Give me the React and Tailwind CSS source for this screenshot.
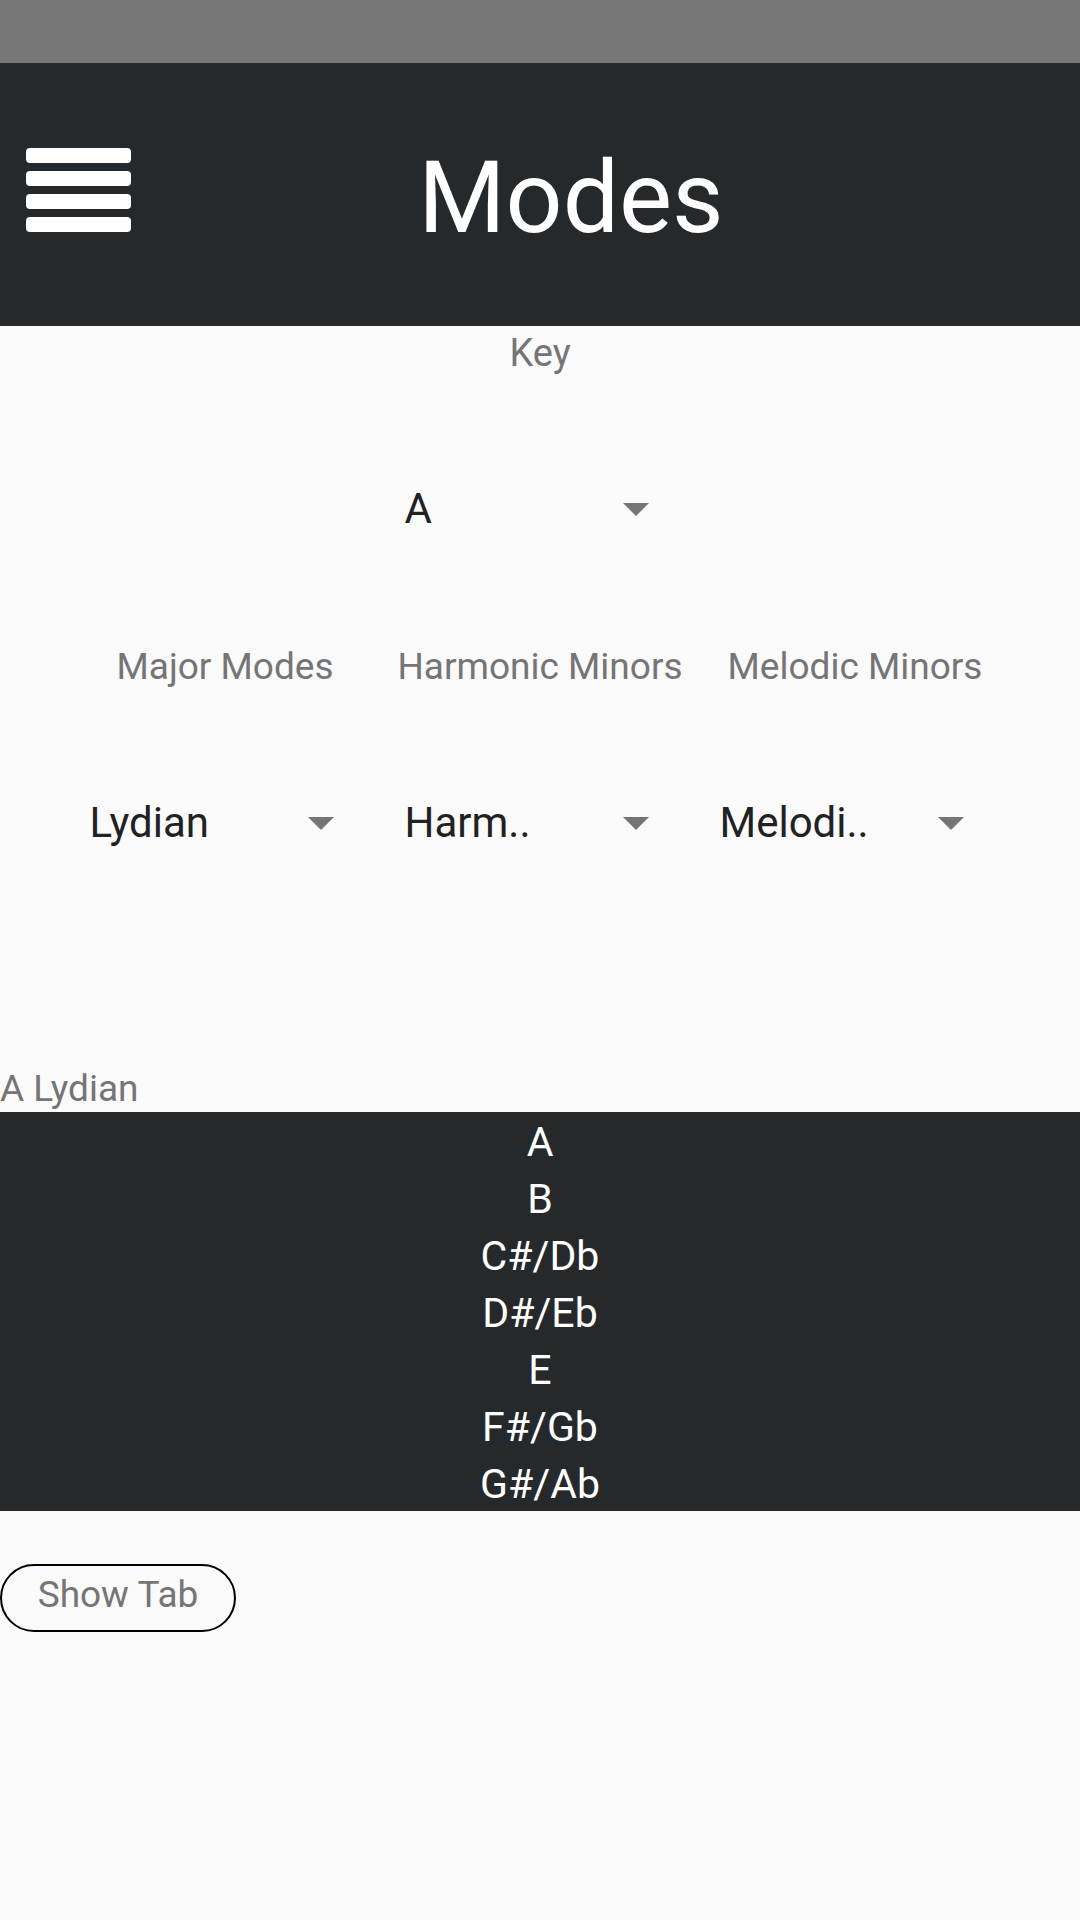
import React, { useState } from "react";

const NOTES = ["A", "B", "C#/Db", "D#/Eb", "E", "F#/Gb", "G#/Ab"];

const COLUMNS = [
  { label: "Major Modes", value: "Lydian" },
  { label: "Harmonic Minors", value: "Harm.." },
  { label: "Melodic Minors", value: "Melodi.." },
];

const Caret = () => (
  <svg width="26" height="13" viewBox="0 0 26 13" className="shrink-0">
    <path d="M0 0 L26 0 L13 13 Z" fill="#757575" />
  </svg>
);

// spinner-style select: value on the left, small triangle on the right
const Dropdown = ({ value }) => (
  <div className="ml-[22px] w-[244px] h-[48px] flex items-center justify-between">
    <span className="text-[42px] leading-[48px] text-[#212121]">{value}</span>
    <Caret />
  </div>
);

const Hamburger = () => (
  <div className="mt-[85px] ml-[26px] w-[105px] flex flex-col gap-[8px]">
    <div className="h-[15px] rounded-[4px] bg-white" />
    <div className="h-[15px] rounded-[4px] bg-white" />
    <div className="h-[15px] rounded-[4px] bg-white" />
    <div className="h-[15px] rounded-[4px] bg-white" />
  </div>
);

export default function App() {
  const [showTab, setShowTab] = useState(false);

  return (
    <div
      className="w-[1080px] min-h-[1920px] bg-[#fafafa]"
      style={{ fontFamily: "Roboto, 'Noto Sans', sans-serif" }}
    >
      <div className="h-[63px] bg-[#777777]" />

      <header className="h-[263px] bg-[#26292c] flex items-start">
        <Hamburger />
        <h1 className="flex-1 pr-[69px] mt-[76px] text-center text-white text-[100px] leading-[117px]">
          Modes
        </h1>
      </header>

      <div className="mt-[5px] text-center text-[38px] leading-[45px] text-[#757575]">Key</div>
      <div className="mt-[109px] w-[315px] mx-auto">
        <Dropdown value="A" />
      </div>

      <div className="mt-[111px] w-[945px] mx-auto grid grid-cols-3">
        {COLUMNS.map((c) => (
          <div key={c.label} className="flex flex-col">
            <div className="text-center text-[37px] leading-[45px] text-[#757575] whitespace-nowrap">
              {c.label}
            </div>
            <div className="mt-[110px]">
              <Dropdown value={c.value} />
            </div>
          </div>
        ))}
      </div>

      <div className="mt-[219px] text-[37px] leading-[46px] text-[#757575]">A Lydian</div>

      <div className="bg-[#26292c] pt-[2px] h-[399px] flex flex-col items-center">
        {NOTES.map((n) => (
          <div key={n} className="text-white text-[41px] leading-[57px] h-[57px] shrink-0">
            {n}
          </div>
        ))}
      </div>

      <button
        onClick={() => setShowTab(!showTab)}
        className="mt-[53px] w-[236px] h-[68px] pb-[7px] rounded-full border-[2.5px] border-black text-[37px] leading-[45px] text-[#757575] flex items-center justify-center"
      >
        Show Tab
      </button>
    </div>
  );
}
